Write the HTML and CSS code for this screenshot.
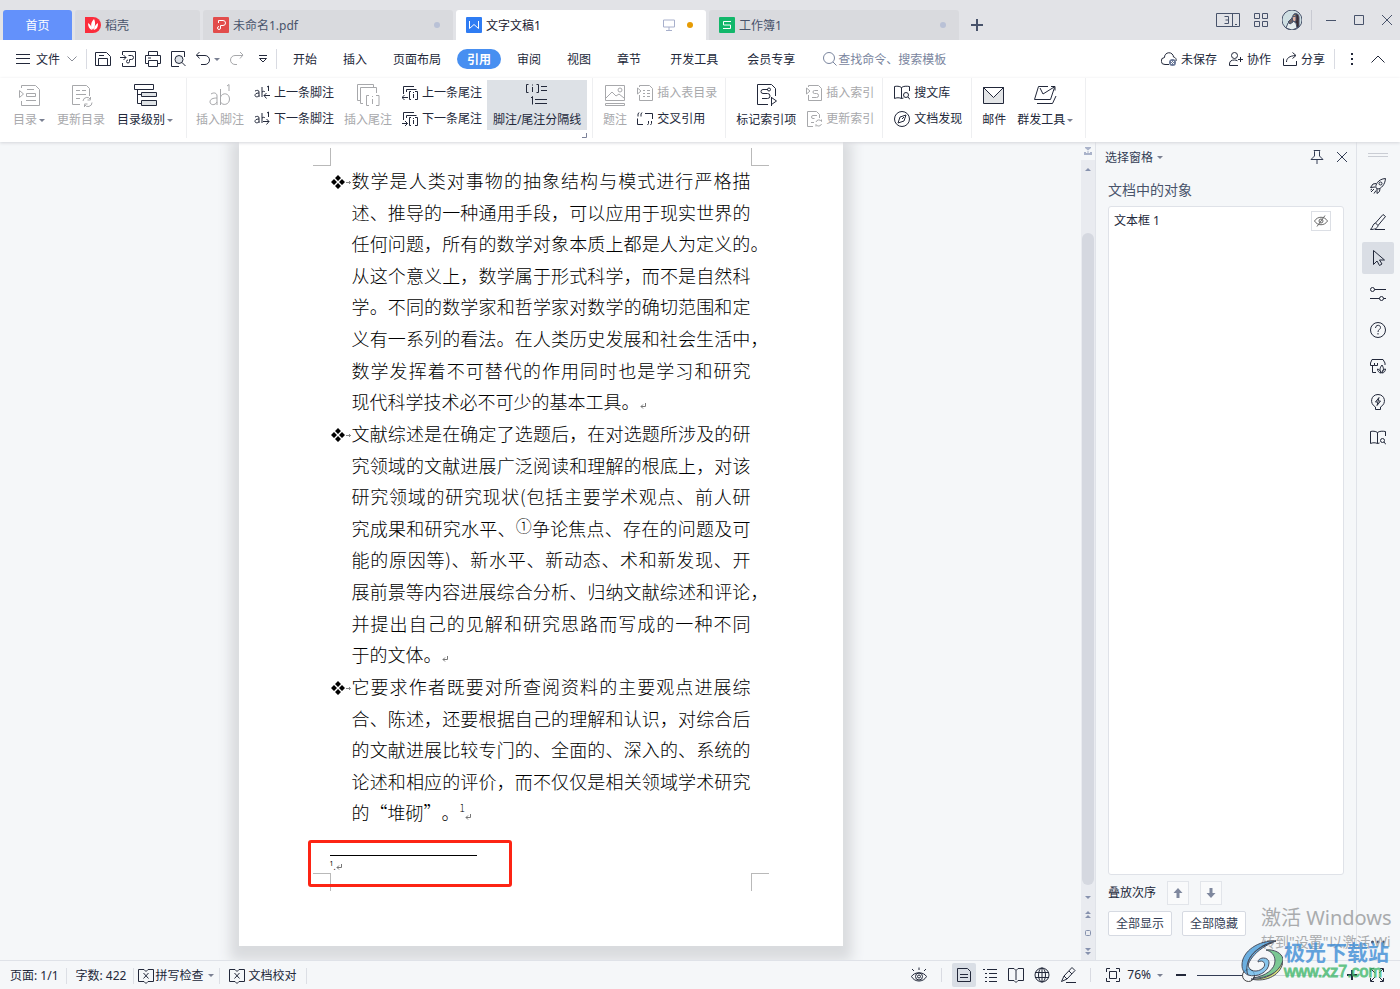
FILE: index.html
```html
<!DOCTYPE html>
<html lang="zh-CN">
<head>
<meta charset="utf-8">
<title>文字文稿1</title>
<link rel="stylesheet" href="styles.css">
</head>
<body>
<header class="titlebar">
  <nav class="doc-tabs" aria-label="文档标签">
    <button class="doc-tab home"><span>首页</span></button>
    <button class="doc-tab short">
      <svg class="i16" viewBox="0 0 16 16"><path d="M0 0h8a8 8 0 0 1 0 16H0z" fill="#fb2d3c" stroke="none"/><path d="M8 13C5 9 6 5 9 2c2 4 1 8-1 11zM7 13C4 12 3 9 3 6c3 2 4 4 4 7zM9 13c0-3 1-5 4-7 0 4-1 6-4 7z" fill="#fff" stroke="none"/></svg>
      <span>稻壳</span>
    </button>
    <button class="doc-tab">
      <svg class="i16" viewBox="0 0 16 16"><rect width="16" height="16" rx="1" fill="#e24c4b" stroke="none"/><path d="M5.500 6V3.500H10a2.500 2.500 0 0 1 0 5H7.500V11A1.500 1.500 0 1 1 6 9.500" stroke="#fff"/></svg>
      <span>未命名1.pdf</span><i class="dot"></i>
    </button>
    <button class="doc-tab current">
      <svg class="i16" viewBox="0 0 16 16"><rect width="16" height="16" rx="1" fill="#2f7cf3" stroke="none"/><path d="M3.500 4v7.500L8 7.500l4.500 4V4" stroke="#fff"/></svg>
      <span>文字文稿1</span>
      <svg class="i12 screen" viewBox="0 0 12 12"><path d="M.5 1h11v7H.5zM6 8v3M3 11.500h6"/></svg><i class="dot amber"></i>
    </button>
    <button class="doc-tab">
      <svg class="i16" viewBox="0 0 16 16"><rect width="16" height="16" rx="1" fill="#12b76a" stroke="none"/><path d="M12 4.500H4.500V8h7v3.500H4" stroke="#fff" stroke-linejoin="round"/></svg>
      <span>工作簿1</span><i class="dot"></i>
    </button>
    <button class="add" aria-label="新建"><svg class="i12" viewBox="0 0 12 12"><path d="M6 0v12M0 6h12" stroke-width="2"/></svg></button>
  </nav>
  <div class="window-tools">
    <button aria-label="窗口数"><svg width="24" height="14" viewBox="0 0 24 14"><path d="M.5.5h23v13H.5zM16.500.5v13M19 11.500h2M8.500 3.500h4v7h-4M9.500 7h3"/></svg></button>
    <button aria-label="应用"><svg width="14" height="14" viewBox="0 0 14 14"><path d="M.5.5h5v5h-5zM8.500.5h5v5h-5zM.5 8.500h5v5h-5zM8.500 8.500h5v5h-5z"/></svg></button>
    <button aria-label="账户"><svg width="20" height="20" viewBox="0 0 20 20" stroke="none"><circle cx="10" cy="10" r="10" fill="#cfdfe3"/><path d="M12 4c3-1 5 0 5 4v8l-2 2-2-6z" fill="#3b2e35"/><path d="M11 5l3-1v2l-3 1z" fill="#c9a36a"/><path d="M10 7l4-1v5l-3 1z" fill="#e3b3a2"/><path d="M4 18l2-5 5-2 3 2 1 5-5 2z" fill="#e6edef"/><path d="M6 12l4-4 1 4-3 2z" fill="#6b6064"/></svg></button>
    <span class="rule"></span>
    <button aria-label="最小化"><svg class="i12" viewBox="0 0 12 12"><path d="M1 6.500h10"/></svg></button>
    <button aria-label="最大化"><svg class="i12" viewBox="0 0 12 12"><path d="M1.500 1.500h9v9h-9z"/></svg></button>
    <button aria-label="关闭"><svg class="i12" viewBox="0 0 12 12"><path d="M1 1l10 10M11 1L1 11"/></svg></button>
  </div>
</header>

<nav class="menubar" aria-label="主菜单">
  <button class="file"><svg width="14" height="12" viewBox="0 0 14 12"><path d="M0 1.500h14M0 5.500h14M0 10.500h14"/></svg><span>文件</span><svg class="faint" width="10" height="6" viewBox="0 0 10 6"><path d="M.5.5L5 5 9.500.5"/></svg></button>
  <span class="rule"></span>
  <div class="quick">
    <button aria-label="保存"><svg class="i16" viewBox="0 0 16 16"><path d="M.5 1.500h11l4 4v9H.5zM3.500 14V7.500h9V14M4 4.500h5"/></svg></button>
    <button aria-label="输出为PDF"><svg class="i16" viewBox="0 0 16 16"><path d="M2.500 4V.5h13v15h-13V12M0 6.500h6M3.500 4L6 6.500 3.500 9M8.500 4.500h3a1.500 1.500 0 0 1 0 4H9.500v2a1.500 1.500 0 1 1-1.500-1.500"/></svg></button>
    <button aria-label="打印"><svg class="i16" viewBox="0 0 16 16"><path d="M3.500 4.500v-4h9v4M3.500 12.500h-3v-8h15v8h-3M3.500 9.500h9v6h-9zM3 7h3"/></svg></button>
    <button aria-label="打印预览"><svg class="i16" viewBox="0 0 16 16"><path d="M14.500 6V.5H1.500v15H9"/><circle cx="9" cy="8.500" r="4" fill="#dfe3e8"/><path d="M12 11.500l3.500 3.500"/></svg></button>
    <button aria-label="撤销"><svg class="i16" viewBox="0 0 16 16"><path d="M4.500 1L1.500 4l3 3.500M1.500 4.500H10a4.500 4.500 0 0 1 0 9H6"/></svg><i class="caret"></i></button>
    <button aria-label="恢复" class="disabled"><svg class="i16" viewBox="0 0 16 16"><path d="M11 1l3 3-3 3.500M14 4.500H6a4.500 4.500 0 0 0 0 9h2"/></svg></button>
    <button aria-label="更多"><svg width="8" height="8" viewBox="0 0 8 8"><path d="M0 .5h8M.5 3.500L4 7l3.500-3.500z"/></svg></button>
  </div>
  <span class="rule"></span>
  <div class="menu-tabs">
    <button>开始</button><button>插入</button><button>页面布局</button><button class="on">引用</button><button>审阅</button><button>视图</button><button>章节</button><button>开发工具</button><button>会员专享</button>
  </div>
  <label class="search"><svg class="i16" viewBox="0 0 16 16"><circle cx="7" cy="7" r="5.500"/><path d="M11 11l3.500 3.500"/></svg><input type="text" placeholder="查找命令、搜索模板" aria-label="查找命令"></label>
  <div class="share">
    <button><svg class="i16" viewBox="0 0 16 16"><path d="M8 13.500H4a3.500 3.500 0 0 1-.5-7 4.500 4.500 0 0 1 9-.5 3 3 0 0 1 2.500 4"/><circle cx="11.500" cy="11.500" r="3.500" fill="#6c7a99" stroke="none"/><path d="M10 10l3 3M13 10l-3 3" stroke="#fff"/></svg><span>未保存</span></button>
    <button><svg class="i14" viewBox="0 0 14 14"><circle cx="5.500" cy="3.500" r="3"/><path d="M9 13.500H.5V12c0-3 2-4 5-4 1 0 2 .2 3 .8M11.500 5v5M9 7.500h5"/></svg><span>协作</span></button>
    <button><svg class="i14" viewBox="0 0 14 14"><path d="M.5 6.500v7h13V9M3.500 10c0-4 3-6 9-6.500M9.500.5l3.500 3-3.500 3"/></svg><span>分享</span></button>
    <span class="rule"></span>
    <button aria-label="更多选项"><svg width="4" height="12" viewBox="0 0 4 12"><path d="M1 1h2M1 6h2M1 11h2" stroke-width="2"/></svg></button>
    <button aria-label="收起功能区"><svg width="14" height="8" viewBox="0 0 14 8"><path d="M.5 7.500L7 1l6.500 6.500"/></svg></button>
  </div>
</nav>

<section class="ribbon" aria-label="引用">
  <div class="group toc">
    <button class="big disabled"><svg class="i24" viewBox="0 0 24 24"><path d="M4.500 5V2.500h14l4 4v16h-18V18M10 6.500h7M9.500 10.500h9v3h-9zM9 17.500h10M2.500 7.500v7l4-3.500z"/></svg><span>目录<i class="caret"></i></span></button>
    <button class="big disabled"><svg class="i24" viewBox="0 0 24 24"><path d="M11 21.500H3.500v-19h14l3 3V13M7 7.500h4M13 7.500h4M7 11.500h10M7 15.500h4M14 18a4 4 0 0 1 7.500-1.500v-2.500M21.500 17h-3M23 19.500a4 4 0 0 1-7.500 2V24M15.500 21h3"/></svg><span>更新目录</span></button>
    <button class="big"><svg class="i24" viewBox="0 0 24 24"><path d="M1.500 1.500h19v5h-19zM4.500 7v13.500h4M4.500 11.500h4"/><path d="M8.500 9.500h15v4h-15zM8.500 17.500h15v5h-15z" fill="#dfe3e6"/></svg><span>目录级别<i class="caret"></i></span></button>
  </div>
  <div class="group notes">
    <button class="big disabled"><svg class="i24" viewBox="0 0 24 24"><path d="M3 11c3-2 6-1 6 2v9M9 15c-4 0-7 1-7 4s5 4 7 0M12.500 6v16M12.500 14c2-5 9-4 9 2s-7 7-9 3M19 3l2-1.500V8"/></svg><span>插入脚注</span></button>
    <div class="stack">
      <button><svg class="i16" viewBox="0 0 16 16"><path d="M1 6c2-1 4-1 4 1v5M5 8C2 8 1 9 1 10.500s3 2 4 0M8 2v10M8 7c2-1 2-1 3 0M13 2l1.500-1v5M16 10.500h-6M12.500 8L10 10.500l2.500 3"/></svg>上一条脚注</button>
      <button><svg class="i16" viewBox="0 0 16 16"><path d="M1 6c2-1 4-1 4 1v5M5 8C2 8 1 9 1 10.500s3 2 4 0M8 2v10M8 7c2-1 2-1 3 0M13 2l1.500-1v5M9 10.500h6M12.500 8l2.500 2.500-2.500 3"/></svg>下一条脚注</button>
    </div>
    <button class="big disabled"><svg class="i24" viewBox="0 0 24 24"><path d="M5 17.500H1.500v-16h16V4M7 20.500H4.500v-16h16V10M13 12.500h-2.500v10H13M20 12.500h3v10h-3M16.500 16v5M16.500 13v1"/></svg><span>插入尾注</span></button>
    <div class="stack">
      <button><svg class="i16" viewBox="0 0 16 16"><path d="M1.500 9V1.500H12M4.500 7V4.500h10M9 6.500H7.500v8H9M13 6.500h2.500v8H13M11.500 9v4M11.500 7v1M6 12.500H0M2.500 10L0 12.500 2.500 15"/></svg>上一条尾注</button>
      <button><svg class="i16" viewBox="0 0 16 16"><path d="M1.500 9V1.500H12M4.500 7V4.500h10M9 6.500H7.500v8H9M13 6.500h2.500v8H13M11.500 9v4M11.500 7v1M0 12.500h5.500M3 10l2.500 2.500L3 15"/></svg>下一条尾注</button>
    </div>
    <button class="big active"><svg class="i24" viewBox="0 0 24 24"><path d="M3.500 1.500h-2v8h2M11.500 1.500h2v8h-2M7.500 4v5M7.500 1.500v1M16 3.500h6M16 7.500h6M6 15l1.500-1.500v8M10 16.500h12M10 20.500h12"/></svg><span>脚注/尾注分隔线</span></button>
    <svg class="launcher" width="5" height="5" viewBox="0 0 5 5"><path d="M0 4.500h4.500V0"/></svg>
  </div>
  <div class="group">
    <button class="big disabled"><svg class="i24" viewBox="0 0 24 24"><path d="M2.500 2.500h19v15h-19zM3 15l6-6 4 4 3-2 5 4M2.500 20.500h19v2h-19z"/><circle cx="17" cy="7" r="2"/></svg><span>题注</span></button>
    <div class="stack">
      <button class="disabled"><svg class="i16" viewBox="0 0 16 16"><path d="M2.500 2V.5h10l3 3v12h-13V10M.5 3v6l3.500-3zM6 5.500h2M10 5.500h3M6 8.500h2M10 8.500h3M6 11.500h2M10 11.500h3"/></svg>插入表目录</button>
      <button><svg class="i16" viewBox="0 0 16 16"><path d="M.5 7.500v6H6M8 2.500h7.500V8M1 5.500V3l1-1.500M4 5.500V3l1-1.500M11.500 10v2.500l-1 1.500M14.500 10v2.500l-1 1.500"/></svg>交叉引用</button>
    </div>
  </div>
  <div class="group">
    <button class="big"><svg class="i24" viewBox="0 0 24 24"><path d="M14 21.500H3.500v-20h14l4 4V13M14 6.500H9a2 2 0 0 0 0 4h4.500a2 2 0 0 1 0 5H8M17.500 14v9M17.500 14.500l5 3.500-5 3.500"/><circle cx="15" cy="6.500" r="1.500"/></svg><span>标记索引项</span></button>
    <div class="stack">
      <button class="disabled"><svg class="i16" viewBox="0 0 16 16"><path d="M2.500 2V.5h10l3 3v12h-13V10M.5 3v6l3.500-3zM12 5.500H8.500a1.500 1.500 0 0 0 0 3h2a1.500 1.500 0 0 1 0 4H6"/></svg>插入索引</button>
      <button class="disabled"><svg class="i16" viewBox="0 0 16 16"><path d="M7 15.500H1.500V.5h9l3 3V7M11 4.500H7a1.500 1.500 0 0 0 0 3h1.500M5 11.500h3M10 11a3 3 0 0 1 5.500-.5V8.500M15.500 13a3 3 0 0 1-5.500.5V15.500"/></svg>更新索引</button>
    </div>
  </div>
  <div class="group library">
    <div class="stack">
      <button><svg class="i16" viewBox="0 0 16 16"><path d="M7.500 2.500v11M7.500 13.500c-2-1-5-1-7 0v-12c2-.5 5-.5 7 1 2-1.500 5-1.500 8-1V6M7.500 13.500l2-.5"/><circle cx="12" cy="10" r="2.500"/><path d="M14 12l2 2.500"/></svg>搜文库</button>
      <button><svg class="i16" viewBox="0 0 16 16"><circle cx="8" cy="8" r="7.500"/><path d="M12 4l-2 6-6 2 2-6zM8 8l2-2"/></svg>文档发现</button>
    </div>
  </div>
  <div class="group mail">
    <button class="big"><svg class="i24" viewBox="0 0 24 24"><path d="M1.500 4.500h20v16h-20z" fill="#e3e5e7"/><path d="M1.500 4.500h20l-10 10z" fill="#fff"/></svg><span>邮件</span></button>
    <button class="big"><svg class="i24" viewBox="0 0 24 24"><path d="M15 3.500H5.500l-4 13h16l4-12M7 5l3 6 12-7.500M18 3.500h4v4M4 20.500h15.500L23 13"/></svg><span>群发工具<i class="caret"></i></span></button>
  </div>
</section>

<main class="workspace">
  <div class="canvas">
    <article class="page">
      <div class="corners top"><i></i><i></i></div>
      <div class="text">
        <p>
          <span class="line bullet"><svg class="diamond" width="20" height="14" viewBox="0 0 20 14"><path d="M7 0l3 3-3 3-3-3zM7 8l3 3-3 3-3-3zM3 4l3 3-3 3-3-3zM11 4l3 3-3 3-3-3z" fill="#000" stroke="none"/><path d="M15 7.500h5M18 6l1.500 1.500L18 9" stroke="#888"/></svg>数学是人类对事物的抽象结构与模式进行严格描</span>
          <span class="line">述、推导的一种通用手段，可以应用于现实世界的</span>
          <span class="line hang">任何问题，所有的数学对象本质上都是人为定义的。</span>
          <span class="line">从这个意义上，数学属于形式科学，而不是自然科</span>
          <span class="line">学。不同的数学家和哲学家对数学的确切范围和定</span>
          <span class="line hang">义有一系列的看法。在人类历史发展和社会生活中，</span>
          <span class="line">数学发挥着不可替代的作用同时也是学习和研究</span>
          <span class="line last">现代科学技术必不可少的基本工具。<svg class="ret" viewBox="0 0 6 6"><path d="M5.500 0v3.500H1M3 1.500l-2 2 2 2"/></svg></span>
        </p>
        <p>
          <span class="line bullet"><svg class="diamond" width="20" height="14" viewBox="0 0 20 14"><path d="M7 0l3 3-3 3-3-3zM7 8l3 3-3 3-3-3zM3 4l3 3-3 3-3-3zM11 4l3 3-3 3-3-3z" fill="#000" stroke="none"/><path d="M15 7.500h5M18 6l1.500 1.500L18 9" stroke="#888"/></svg>文献综述是在确定了选题后，在对选题所涉及的研</span>
          <span class="line">究领域的文献进展广泛阅读和理解的根底上，对该</span>
          <span class="line">研究领域的研究现状(包括主要学术观点、前人研</span>
          <span class="line">究成果和研究水平、<sup class="ring">①</sup>争论焦点、存在的问题及可</span>
          <span class="line">能的原因等)、新水平、新动态、术和新发现、开</span>
          <span class="line hang">展前景等内容进展综合分析、归纳文献综述和评论，</span>
          <span class="line">并提出自己的见解和研究思路而写成的一种不同</span>
          <span class="line last">于的文体。<svg class="ret" viewBox="0 0 6 6"><path d="M5.500 0v3.500H1M3 1.500l-2 2 2 2"/></svg></span>
        </p>
        <p>
          <span class="line bullet"><svg class="diamond" width="20" height="14" viewBox="0 0 20 14"><path d="M7 0l3 3-3 3-3-3zM7 8l3 3-3 3-3-3zM3 4l3 3-3 3-3-3zM11 4l3 3-3 3-3-3z" fill="#000" stroke="none"/><path d="M15 7.500h5M18 6l1.500 1.500L18 9" stroke="#888"/></svg>它要求作者既要对所查阅资料的主要观点进展综</span>
          <span class="line">合、陈述，还要根据自己的理解和认识，对综合后</span>
          <span class="line">的文献进展比较专门的、全面的、深入的、系统的</span>
          <span class="line">论述和相应的评价，而不仅仅是相关领域学术研究</span>
          <span class="line last">的“堆砌”。<sup class="ref">1</sup><svg class="ret" viewBox="0 0 6 6"><path d="M5.500 0v3.500H1M3 1.500l-2 2 2 2"/></svg></span>
        </p>
      </div>
      <div class="footnote">
        <hr>
        <div class="note"><sup>1</sup>.<svg class="ret" viewBox="0 0 6 6"><path d="M5.500 0v3.500H1M3 1.500l-2 2 2 2"/></svg></div>
        <div class="highlight"></div>
      </div>
      <div class="corners bottom"><i></i><i></i></div>
    </article>
  </div>

  <div class="scrollbar">
    <button class="split" aria-label="拆分"><svg width="8" height="8" viewBox="0 0 8 8"><path d="M1 0h6v1L4 3.500 1 1zM0 5h2v1h1.500V4h1v2H6V5h2v3H0z"/></svg></button>
    <button aria-label="向上"><svg width="6" height="3" viewBox="0 0 6 3"><path d="M0 3l3-3 3 3z"/></svg></button>
    <div class="track"><div class="thumb"></div></div>
    <button aria-label="向下"><svg width="6" height="3" viewBox="0 0 6 3"><path d="M0 0h6L3 3z"/></svg></button>
    <button aria-label="上一页"><svg width="6" height="8" viewBox="0 0 6 8"><path d="M0 3l3-3 3 3zM0 7l3-3 3 3z"/></svg></button>
    <button aria-label="选择浏览对象"><svg class="hollow" width="6" height="6" viewBox="0 0 6 6"><rect x=".5" y=".5" width="5" height="5" rx="1"/></svg></button>
    <button aria-label="下一页"><svg width="6" height="8" viewBox="0 0 6 8"><path d="M0 1h6L3 4zM0 5h6L3 8z"/></svg></button>
  </div>

  <aside class="panel">
    <div class="panel-head">
      <button><span>选择窗格</span><i class="caret"></i></button>
      <button class="push" aria-label="固定"><svg class="i14" viewBox="0 0 14 14"><path d="M4 .5h6l-.5 1V6l3.500 3.500H1L4.500 6V1.500zM7 9.500V14"/></svg></button>
      <button aria-label="关闭窗格"><svg class="i12" viewBox="0 0 12 12"><path d="M1 1l10 10M11 1L1 11"/></svg></button>
    </div>
    <h2>文档中的对象</h2>
    <ul class="objects">
      <li><span>文本框 1</span><button aria-label="隐藏对象"><svg width="14" height="12" viewBox="0 0 14 12"><path d="M.5 6c3-5 10-5 13 0-3 5-10 5-13 0zM11 .5l-8 11"/><circle cx="7" cy="6" r="2"/></svg></button></li>
    </ul>
    <div class="order"><span>叠放次序</span>
      <button aria-label="上移"><svg width="10" height="10" viewBox="0 0 10 10"><path d="M5 0l4.500 5H6.500v5h-3V5H.5z"/></svg></button>
      <button aria-label="下移"><svg width="10" height="10" viewBox="0 0 10 10"><path d="M5 10L.5 5h3V0h3v5h3z"/></svg></button>
    </div>
    <div class="show"><button>全部显示</button><button>全部隐藏</button></div>
  </aside>

  <nav class="rail" aria-label="任务窗格">
    <span class="grip"></span>
    <button aria-label="快捷"><svg class="i16" viewBox="0 0 16 16"><path d="M6 10c-1-3 2-9 9.500-9.500C15 7 11 10.500 8 11zM6 5.500L3 6 .5 9.500 5 9M10 10.500l-.5 3L7 15.500V11M4 11L1 14M6 12.500l-2 3M2 11l-1.500 1"/><circle cx="10.500" cy="5.500" r="1.500"/></svg></button>
    <button aria-label="样式"><svg class="i16" viewBox="0 0 16 16"><path d="M13 .5l2.500 2L8 11.500 5.500 9zM5.500 9C3 9.500 3 13 .5 15.500c4 0 7-1 7.500-4M5 15.500h10"/></svg></button>
    <button class="on" aria-label="选择"><svg class="i16" viewBox="0 0 16 16"><path d="M3.500.5v14L7 11l2.500 4.500 2.500-1.500-2.500-4h5z"/></svg></button>
    <button aria-label="属性"><svg class="i16" viewBox="0 0 16 16"><circle cx="2.500" cy="3.500" r="2"/><circle cx="11.500" cy="12.500" r="2"/><path d="M4.500 3.500H16M0 12.500h9.500M13.500 12.500H16"/></svg></button>
    <button aria-label="帮助"><svg class="i16" viewBox="0 0 16 16"><circle cx="8" cy="8" r="7.500"/><path d="M5.500 6c0-3.500 5-3.500 5-.5 0 2-2.500 2-2.500 4.500M8 11v1.500"/></svg></button>
    <button aria-label="素材"><svg class="i16" viewBox="0 0 16 16"><path d="M6 14.500H2.500V8M.5 5L2 1.500h11L15 5v2M.5 5v2.500h4V5M4.500 7.500h3V5"/><path d="M11.500 15c-2-2-2-5 .5-8 2 3 2 6-.5 8zM11 15c-2 0-3.500-2-3.500-4 2 .5 3 2 3.500 4zM12 15c0-2 1-4 3.500-4 0 2-1.500 4-3.500 4z"/></svg></button>
    <button aria-label="灵感"><svg class="i16" viewBox="0 0 16 16"><path d="M5.500 13C-1 9.500 1 .5 8 .5s9 9 2.500 12.500v2.500h-5zM9 3.500L5.500 8h2.500l-1 3.500L10.500 7H8z"/></svg></button>
    <button aria-label="文库"><svg class="i16" viewBox="0 0 16 16"><path d="M7.500 2.500v11M7.500 13.500c-2-1-5-1-7 0v-12c2-.5 5-.5 7 1 2-1.500 5-1.500 8-1V6M7.500 13.500l2-.5"/><circle cx="12.500" cy="10.500" r="2"/><path d="M14 12l2 2.500"/></svg></button>
    <button class="more" aria-label="更多面板"><svg class="i16" viewBox="0 0 16 16"><circle cx="2.500" cy="8" r="1.500"/><circle cx="8" cy="8" r="1.500"/><circle cx="13.500" cy="8" r="1.500"/></svg></button>
  </nav>
</main>

<footer class="status">
  <div class="left">
    <span class="cell">页面: 1/1</span>
    <span class="cell">字数: 422</span>
    <button class="cell tight"><svg class="i16" viewBox="0 0 16 16"><path d="M6 1.500H.5v12H6l2 2 2-2h5.500v-12H10l-2 2zM5.500 5l5 5.500M10.500 5l-5 5.500"/></svg>拼写检查<i class="caret"></i></button>
    <button class="cell"><svg class="i16" viewBox="0 0 16 16"><path d="M6 1.500H.5v12H6l2 2 2-2h5.500v-12H10l-2 2zM5.500 5l5 5.500M10.500 5l-5 5.500"/></svg>文档校对</button>
  </div>
  <div class="right">
    <button aria-label="护眼模式"><svg class="i16" viewBox="0 0 16 16"><path d="M.5 9.500c3-5 12-5 15 0-3 6-12 6-15 0zM8 3V.5M3 4L1 2M13 4l2-2"/><circle cx="8" cy="9.500" r="3.500"/><circle cx="8" cy="9.500" r="1.500"/></svg></button>
    <span class="rule"></span>
    <button class="on" aria-label="页面视图"><svg class="i16" viewBox="0 0 16 16"><path d="M1.500 1.500h10l3 3v10h-13zM4 7.500h8M4 10.500h8"/></svg></button>
    <button aria-label="大纲"><svg class="i16" viewBox="0 0 16 16"><path d="M1 2.500h2M5 2.500h10M3 6.500h2M7 6.500h8M3 10.500h2M7 10.500h8M3 14.500h2M7 14.500h8"/></svg></button>
    <button aria-label="阅读版式"><svg class="i16" viewBox="0 0 16 16"><path d="M6 1.500H.5v12H6l2 2 2-2h5.500v-12H10l-2 2zM8 3.500V13"/></svg></button>
    <button aria-label="Web版式"><svg class="i16" viewBox="0 0 16 16"><circle cx="8" cy="8" r="7"/><ellipse cx="8" cy="8" rx="3.500" ry="7"/><path d="M8 1v14M1 5.500h14M1 10.500h14"/></svg></button>
    <button aria-label="写作模式"><svg class="i16" viewBox="0 0 16 16"><path d="M12 .5l3 3L7 12l-5.500 2.500L4 9zM4 9l3 3M9 4l3 3M6 15.500h10"/></svg></button>
    <span class="rule"></span>
    <button aria-label="最佳显示比例"><svg class="i16" viewBox="0 0 16 16"><path d="M1.500 5V1.500H5M11 1.500h3.500V5M14.500 11v3.500H11M5 14.500H1.500V11M4.500 4.500h7v7h-7z"/></svg></button>
    <button class="percent">76%<i class="caret"></i></button>
    <button aria-label="缩小"><svg class="i12" viewBox="0 0 12 12"><path d="M1 6h10" stroke-width="2"/></svg></button>
    <input class="zoom" type="range" min="0" max="100" value="34" aria-label="显示比例">
    <button aria-label="放大"><svg class="i12" viewBox="0 0 12 12"><path d="M1 6h10M6 1v10" stroke-width="2"/></svg></button>
    <button class="full" aria-label="全屏"><svg class="i16" viewBox="0 0 16 16"><path d="M1.500 5V1.500H5M11 1.500h3.500V5M14.500 11v3.500H11M5 14.500H1.500V11M2 2l4 4M14 2l-4 4M14 14l-4-4M2 14l4-4"/></svg></button>
  </div>
</footer>

<div class="activate"><strong>激活 Windows</strong><span>转到"设置"以激活 Wi</span></div>
<div class="brand">
  <svg width="42" height="42" viewBox="0 0 42 42" stroke="none"><path d="M35 1C18 0 1 11 1 25c0 5 2 8 6 10C3 24 14 9 35 1z" fill="#4a9edb"/><path d="M35 1C20 5 7 15 7 24c0 8 10 9 15 4 4-4 0-9-5-6 0-5 11-6 11 1 0 9-12 15-21 12C2 22 13 6 35 1z" fill="#6cb9ea"/><path d="M25 10c8-1 16 3 17 9 0 11-15 20-30 19 13-2 22-9 22-17 0-6-4-10-9-11z" fill="#5dbd7c"/><path d="M10 39c14 1 27-5 32-18-1 13-16 22-32 18z" fill="#d5df5c"/></svg>
  <div><strong>极光下载站</strong><span>www.xz7.com</span></div>
</div>
</body>
</html>
```

FILE: styles.css
```css
* { box-sizing: border-box; }

body {
  margin: 0;
  height: 100vh;
  display: flex;
  flex-direction: column;
  overflow: hidden;
  position: relative;
  background: #f5f7f9;
  color: #22283a;
  font-family: "Noto Sans", "Noto Sans CJK SC", sans-serif;
  font-size: 12px;
  line-height: 16px;
}

button, input {
  font: inherit;
  color: inherit;
  background: none;
  border: 0;
  padding: 0;
  margin: 0;
}

button {
  display: flex;
  align-items: center;
  justify-content: center;
  white-space: nowrap;
}

svg { fill: none; stroke: currentColor; flex: none; display: block; }
.i12 { width: 12px; height: 12px; }
.i14 { width: 14px; height: 14px; }
.i16 { width: 16px; height: 16px; }
.i24 { width: 24px; height: 24px; }

.caret {
  display: inline-block;
  border: 3px solid transparent;
  border-top-color: #7a8092;
  border-bottom: 0;
  margin-left: 2px;
  vertical-align: middle;
}

.rule { width: 1px; height: 20px; background: #d9dbe2; }
.disabled { color: #a7a8ab; }

/* Title bar */
.titlebar {
  display: flex;
  justify-content: space-between;
  height: 40px;
  flex: none;
  background: #e2e3e7;
  color: #48536b;
}
.doc-tabs { display: flex; gap: 3px; padding: 10px 0 0 3px; }
.doc-tab {
  width: 250px;
  gap: 4px;
  justify-content: flex-start;
  padding: 0 13px 0 10px;
  background: #d9dade;
  border-radius: 3px 3px 0 0;
}
.doc-tab span, .file span, .share span, .panel-head span { padding-top: 2px; }
.doc-tab.short { width: 125px; }
.doc-tab.home { width: 69px; padding: 0; justify-content: center; background: #6391fb; color: #fff; }
.doc-tab.current { background: #fff; color: #1b2030; }
.dot { width: 6px; height: 6px; border-radius: 50%; background: #b9c1d6; margin-left: auto; }
.screen { margin-left: auto; color: #a8b0cc; }
.dot.amber { background: #e69b04; margin-left: 8px; }
.add { padding: 0 12px 0 9px; }
.window-tools { display: flex; align-items: center; gap: 14px; padding-right: 6px; }
.window-tools .rule { background: #c8cad2; margin: 0 -2px 0 -5px; }
.window-tools .rule ~ button { padding: 0 1px; }

/* Menu bar */
.menubar { display: flex; align-items: center; height: 38px; flex: none; background: #fff; padding: 0 15px 0 16px; }
.file { gap: 6px; margin-right: 9px; }
.file .faint { margin-left: 1px; color: #8a8d97; }
.quick { display: flex; align-items: center; gap: 9px; padding: 0 9px 0 8px; }
.quick .caret { margin-left: 3px; }
.quick button:last-child { padding-left: 5px; }
.menu-tabs { display: flex; gap: 6px; padding-left: 6px; }
.menu-tabs button { height: 20px; padding: 2px 10px 0; border-radius: 10px; }
.menu-tabs button:nth-child(n + 8) { margin-left: 3px; }
.menu-tabs .on { background: #478ff1; color: #fff; font-weight: 700; }
.search { display: flex; align-items: center; margin-left: 17px; color: #7a859e; }
.search input { width: 130px; height: 20px; outline: 0; }
.search input::placeholder { color: #7a859e; opacity: 1; }
.share { display: flex; align-items: center; gap: 12px; margin-left: auto; }
.share button { gap: 4px; }
.share .rule { margin: 0 3px 0 -3px; }
.share button:last-child { margin-left: 5px; }

/* Ribbon */
.ribbon {
  display: flex;
  height: 64px;
  flex: none;
  background: #fff;
  box-shadow: 0 1px 3px #d4d6da;
  z-index: 1;
}
.group { display: flex; gap: 10px; padding: 2px 9px 0 10px; position: relative; }
.group::after { content: ""; position: absolute; right: 0; top: 0; width: 1px; height: 60px; background: #eeeff1; }
.toc { gap: 12px; padding-left: 13px; padding-right: 14px; }
.notes { padding-left: 9px; padding-right: 11px; }
.library { padding-left: 11px; padding-right: 10px; }
.mail { gap: 11px; padding-right: 13px; }
.big { flex-direction: column; justify-content: flex-start; gap: 5px; height: 50px; padding-top: 3px; }
.big.active { background: #dde1e6; margin: 0 -5px; padding-left: 5px; padding-right: 5px; min-width: 100px; }
.stack { display: flex; flex-direction: column; gap: 10px; padding-top: 5px; }
.stack button { gap: 4px; justify-content: flex-start; }
.launcher { position: absolute; right: 6px; bottom: 4px; color: #7b8199; }

/* Workspace */
.workspace { flex: 1; min-height: 0; display: flex; border-bottom: 1px solid #dfe2e8; }
.canvas { flex: 1; min-width: 0; display: flex; justify-content: center; align-items: flex-start; overflow: hidden; }
.page {
  width: 604px;
  flex: none;
  padding-bottom: 55px;
  background: #fff;
  box-shadow: 0 6px 12px 9px #d9dbde;
  color: #000;
}
.corners { display: flex; justify-content: space-between; padding: 0 74px; }
.corners i { width: 18px; height: 18px; border: 0 solid #b9b9b9; }
.corners i:first-child { border-right-width: 1px; }
.corners i:last-child { border-left-width: 1px; }
.corners.top { padding-top: 6px; }
.corners.top i { border-bottom-width: 1px; }
.corners.bottom i { border-top-width: 1px; }

.text {
  display: grid;
  grid-auto-rows: 1fr;
  align-items: start;
  height: 664px;
  margin: 0 92px 0 113px;
  font-family: "Noto Sans CJK SC", sans-serif;
  font-weight: 300;
  font-size: 18px;
  line-height: 28px;
  text-spacing-trim: space-all;
}
.text p { display: contents; }
.line { display: block; white-space: nowrap; text-align: justify; text-align-last: justify; position: relative; }
.line.hang { margin-right: -18px; }
.line.last { text-align-last: left; }
.diamond { position: absolute; left: -21px; top: 9px; }
.ret { display: inline-block; width: 6px; height: 6px; color: #777; }
.ring, .ref { line-height: 0; }
.ring { font-size: 16px; vertical-align: 4px; }
.ref { font-size: 10px; vertical-align: 8px; }

.footnote { position: relative; height: 43px; padding: 25px 0 0 91px; }
.footnote hr { width: 147px; height: 1px; margin: 0; border: 0; background: #000; }
.note { font-size: 8px; line-height: 16px; padding-top: 3px; }
.note sup { font-size: 7px; line-height: 0; }
.highlight { position: absolute; left: 69px; top: 10px; width: 204px; height: 47px; border: 3px solid #fd2414; border-radius: 3px; }

/* Scroll bar */
.scrollbar { width: 14px; display: flex; flex-direction: column; background: #e9ebf0; color: #8792ae; }
.scrollbar svg { fill: currentColor; stroke: none; }
.scrollbar .hollow { fill: none; stroke: currentColor; }
.scrollbar button { height: 18px; }
.scrollbar .split { background: #f5f7f9; color: #aab3ca; }
.track { flex: 1; padding: 55px 1px 3px; display: flex; }
.thumb { flex: 1; background: #d5d8e0; border-radius: 6px; }

/* Selection pane */
.panel {
  width: 262px;
  display: flex;
  flex-direction: column;
  padding: 6px 12px 24px 12px;
  border-left: 1px solid #e0e3e9;
  border-right: 1px solid #e0e3e9;
}
.panel-head { display: flex; align-items: center; height: 18px; color: #333d55; margin: 0 -4px 0 -3px; }
.panel-head button { height: 18px; }
.panel-head .caret { margin-left: 4px; }
.push { margin-left: auto; margin-right: 12px; }
.panel-head button:last-child { padding-right: 0; }
.panel h2 { margin: 14px 0 6px; font-size: 14px; line-height: 20px; font-weight: 400; color: #48536b; }
.objects { flex: 1; margin: 0; padding: 4px 12px 4px 5px; list-style: none; background: #fff; border: 1px solid #dfe2e8; border-radius: 3px; }
.objects li { display: flex; justify-content: space-between; align-items: center; }
.objects button { width: 20px; height: 20px; border: 1px solid #dcdfe5; color: #686868; }
.order { display: flex; align-items: center; gap: 11px; padding: 6px 0; }
.order button { width: 22px; height: 24px; border: 1px solid #e2e5ea; background: #f9fafb; color: #7f889e; }
.order svg { fill: currentColor; stroke: none; }
.show { display: flex; gap: 10px; }
.show button { height: 25px; padding: 0 7px; border: 1px solid #d6dae2; border-radius: 2px; background: #fff; color: #333d55; }

/* Task rail */
.rail { width: 43px; display: flex; flex-direction: column; align-items: center; gap: 4px; padding: 11px 1px 10px 0; }
.grip { width: 20px; height: 4px; margin-bottom: 9px; border: 1px solid #cacdd4; border-width: 1px 0; }
.rail button { width: 32px; height: 32px; border-radius: 2px; }
.rail .on { background: #dadee5; }
.rail .more { margin-top: auto; height: 16px; }
.rail .more svg { fill: #48536b; stroke: none; }

/* Status bar */
.status { height: 28px; flex: none; display: flex; justify-content: space-between; align-items: center; padding-right: 15px; }
.left, .right { display: flex; align-items: center; }
.left { padding-top: 1px; }
.cell { height: 16px; padding: 0 9px; border-right: 1px solid #dcdfe5; gap: 3px; white-space: nowrap; }
.cell:first-child { padding-left: 10px; padding-right: 7px; }
.cell:nth-child(2) { padding-right: 7px; }
.cell.tight { padding: 0 5px 0 4px; gap: 1px; }
.cell .caret { margin-left: 4px; }
.right { gap: 10px; }
.right .rule { height: 14px; margin: 0 4px; }
.right .on { background: #d9dee5; border-radius: 2px; padding: 4px; margin: 0 -4px; }
.percent { margin-left: -4px; margin-right: 2px; }
.percent .caret { margin-left: 6px; }
.right .full { margin-left: 1px; }
.zoom { appearance: none; width: 144px; height: 16px; margin-right: -5px; background: linear-gradient(to right, #333d55 36%, #cfd3dc 36%) center / 100% 1px no-repeat; }
.zoom::-webkit-slider-thumb { appearance: none; width: 13px; height: 13px; border: 1px solid #444; border-radius: 50%; background: #f5f7f9; }

/* Overlaid marks */
.activate { position: absolute; right: 0; bottom: 37px; width: 139px; white-space: nowrap; color: #a9abad; pointer-events: none; z-index: 2; }
.activate strong { display: block; font-size: 20px; line-height: 28px; font-weight: 400; }
.activate span { display: block; font-size: 14px; line-height: 20px; }
.brand { position: absolute; right: 11px; bottom: 7px; display: flex; align-items: center; gap: 1px; opacity: .8; pointer-events: none; z-index: 3; }
.brand strong { display: block; font-size: 21px; line-height: 22px; color: #3e8dd6; }
.brand span { display: block; font-family: "Liberation Sans", sans-serif; font-size: 16px; line-height: 18px; color: #42b86d; -webkit-text-stroke: 1px #42b86d; }
```
